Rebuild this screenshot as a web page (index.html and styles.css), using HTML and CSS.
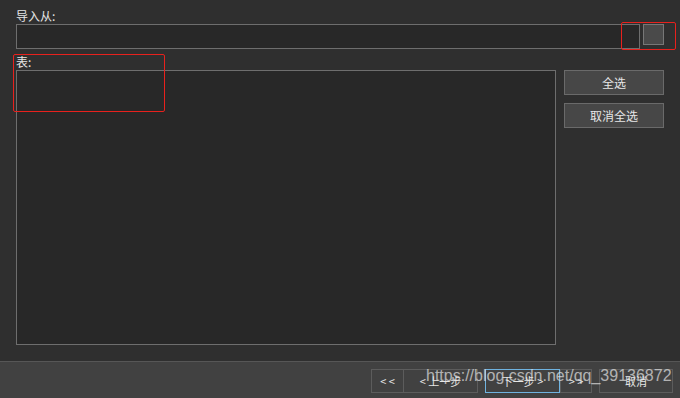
FILE: index.html
```html
<!DOCTYPE html>
<html>
	<head>
		<meta charset="UTF-8">
		<title>导入向导</title>
		<link rel="stylesheet" href="styles.css">
	</head>
	<body>
		<div class="wizard">
			<div class="main">
				<div class="label">导入从:</div>
				<div class="source-row">
					<div class="source-input"></div>
					<span class="browse-btn"></span>
				</div>
				<div class="label label-table">表:</div>
				<div class="table-row">
					<div class="table-list"></div>
					<div class="side-btns">
						<span class="btn">全选</span>
						<span class="btn">取消全选</span>
					</div>
				</div>
			</div>
			<div class="footer">
				<span class="nav-btn nav-first">&lt; &lt;</span>
				<span class="nav-btn nav-prev">&lt; 上一步</span>
				<span class="nav-btn nav-next">下一步 &gt;</span>
				<span class="nav-btn nav-last">&gt; &gt;</span>
				<span class="nav-btn nav-cancel">取消</span>
			</div>
			<!-- 标注框 -->
			<div class="mark mark-browse"></div>
			<div class="mark mark-table"></div>
			<div class="watermark">https://blog.csdn.net/qq_39136872</div>
		</div>
	</body>
</html>
```

FILE: styles.css
```css
* {
	padding: 0;
	margin: 0;
	box-sizing: border-box;
}
html,body {
	height: 100%;
	background: #2f2f2f;
}
body {
	font-family: "Noto Sans CJK SC", "Noto Sans", sans-serif;
	font-size: 12px;
	color: #e6e6e6;
}
.wizard {
	position: relative;
	width: 680px;
	height: 398px;
	overflow: hidden;
}
.main {
	height: 361px;
	padding: 8px 16px 0 16px;
}
.label {
	height: 16px;
	line-height: 16px;
}
.label-table {
	margin-top: 5px;
}
.source-row {
	display: flex;
	gap: 3px;
}
.source-input {
	width: 624px;
	height: 25px;
	border: 1px solid #6e6e6e;
	background: #282828;
}
.browse-btn {
	width: 21px;
	height: 21px;
	border: 1px solid #777777;
	background: #4a4a4a;
}
.table-row {
	display: flex;
	gap: 8px;
}
.table-list {
	width: 540px;
	height: 275px;
	border: 1px solid #6e6e6e;
	background: #282828;
}
.side-btns {
	display: flex;
	flex-direction: column;
	gap: 8px;
}
.btn {
	display: block;
	width: 100px;
	height: 25px;
	line-height: 23px;
	border: 1px solid #6a6a6a;
	background: #474747;
	text-align: center;
}
.footer {
	height: 37px;
	border-top: 1px solid #565656;
	background: #414141;
	display: flex;
	padding: 7px 0 0 371px;
}
.nav-btn {
	display: block;
	height: 24px;
	line-height: 22px;
	border: 1px solid #5c5c5c;
	text-align: center;
	font-size: 11px;
}
.nav-first {
	width: 33px;
}
.nav-prev {
	width: 75px;
	margin-left: -1px;
}
.nav-next {
	width: 75px;
	margin-left: 7px;
	border-color: #6fb3e0;
}
.nav-last {
	width: 32px;
}
.nav-cancel {
	width: 74px;
	margin-left: 7px;
}
.mark {
	position: absolute;
	border: 1px solid #e8211d;
	border-radius: 2px;
}
.mark-browse {
	left: 621px;
	top: 22px;
	width: 55px;
	height: 28px;
}
.mark-table {
	left: 13px;
	top: 54px;
	width: 152px;
	height: 58px;
}
.watermark {
	position: absolute;
	left: 426px;
	top: 367px;
	font-family: "Liberation Sans", Arial, sans-serif;
	font-size: 16px;
	color: rgba(230, 230, 230, 0.7);
	white-space: nowrap;
}
```
